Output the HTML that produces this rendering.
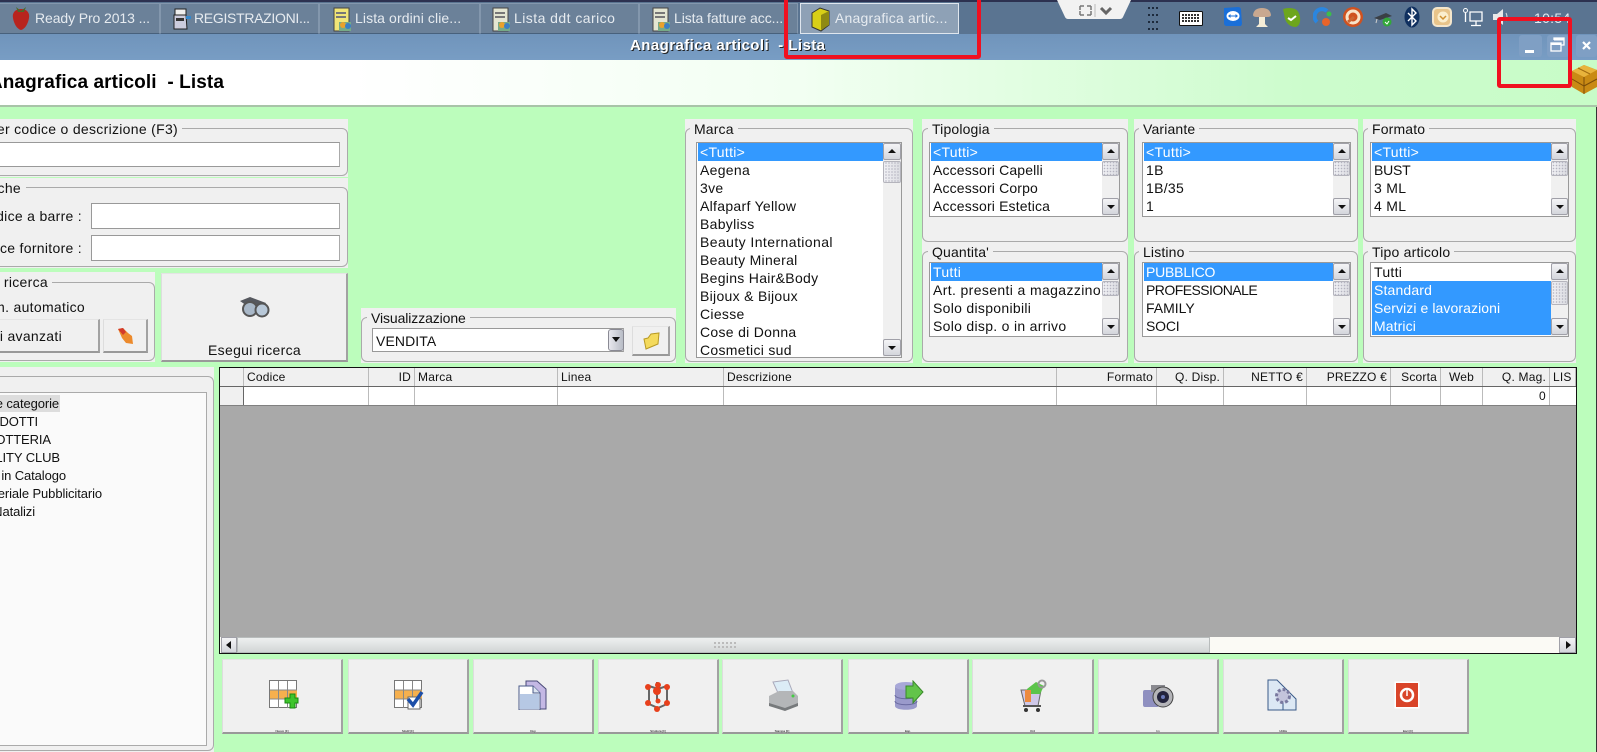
<!DOCTYPE html>
<html><head><meta charset="utf-8"><style>
html,body{margin:0;padding:0;width:1597px;height:752px;overflow:hidden;background:#bcfdbc}
body{position:relative;font-family:"Liberation Sans",sans-serif;font-size:14px;letter-spacing:.3px;color:#111}
div,span,svg{position:absolute;box-sizing:border-box}
.t{white-space:pre;line-height:18px}
.tab{top:3px;height:31px;background:#6b8199;border:1px solid #8397ad;border-bottom-color:#48617c;color:#e8edf2}
.tt{top:9px;color:#e6ebf0;white-space:pre;line-height:18px;font-size:14px}
.p{background:#f0f0f0}
.b{border:1px solid #aaa;border-radius:6px}
.lg{background:#f0f0f0;top:0;height:18px;padding:0 4px;line-height:20px;white-space:pre;letter-spacing:.15px}
.lb{background:#fff;border:1px solid #999;overflow:hidden}
.r{left:1px;height:18px;line-height:18px;padding-left:2px;white-space:pre;width:calc(100% - 2px)}
.s{background:#39f;color:#fff}
.sb{background:#f0f0f0;top:0;bottom:0}
.ub,.db{left:0;right:0;height:17px;background:linear-gradient(#f4f4f6,#d4d6dc);border:1px solid #a0a0a8;border-radius:2px}
.ub:after{content:"";position:absolute;left:4px;top:5px;border:4px solid transparent;border-top:0;border-bottom:4px solid #111}
.db:after{content:"";position:absolute;left:4px;top:6px;border:4px solid transparent;border-bottom:0;border-top:4px solid #111}
.th{left:0;right:0;background:radial-gradient(circle,#b4b4c0 30%,transparent 42%) center/3px 3px,linear-gradient(90deg,#f0f0f4,#dcdde2);border:1px solid #b4b4bc;border-radius:2px}
.in{background:#fff;border:1px solid #999;border-right-color:#aaa}
.btn{background:#f0f0f0;border:1px solid #eee;border-right:2px solid #a2a2a2;border-bottom:2px solid #999;border-top-color:#e4e4e4;border-left-color:#ddd}
.h{top:368px;height:18px;font-size:12px;line-height:19px;white-space:pre;background:#f0f0f0;border-right:1px solid #bbb;padding:0 3px;overflow:hidden;letter-spacing:.2px}
.c{top:387px;height:18px;background:#fff;border-right:1px solid #bbb}
.ra{text-align:right}
.red{border:4px solid #f01020;border-radius:3px;z-index:9}
.cap{left:0;right:0;top:69px;text-align:center;font-size:3px;line-height:4px;color:#000;letter-spacing:0}
.tr{font-size:13px;letter-spacing:-.1px;text-align:right;left:-100px}
.ce{letter-spacing:.15px}
</style></head><body>

<!-- taskbar -->
<div style="left:0;top:0;width:1597px;height:34px;background:#5a7491"></div>
<div style="left:0;top:0;width:1597px;height:2px;background:#2c3150"></div>
<div class="tab" style="left:-2px;width:162px"></div>
<div class="tab" style="left:160px;width:159px"></div>
<div class="tab" style="left:319px;width:161px"></div>
<div class="tab" style="left:480px;width:159px"></div>
<div class="tab" style="left:639px;width:159px"></div>
<div class="tab" style="left:800px;width:159px;background:#8ea1b6;border-color:#dfe6ee"></div>
<div class="tt" style="left:35px;letter-spacing:-.1px">Ready Pro 2013 ...</div>
<div class="tt" style="left:194px;letter-spacing:-.3px">REGISTRAZIONI...</div>
<div class="tt" style="left:355px;letter-spacing:.1px">Lista ordini clie...</div>
<div class="tt" style="left:514px;letter-spacing:.45px">Lista ddt carico</div>
<div class="tt" style="left:674px;letter-spacing:-.07px">Lista fatture acc...</div>
<div class="tt" style="left:835px;letter-spacing:.2px">Anagrafica artic...</div>

<svg style="left:10px;top:6px" width="22" height="25" viewBox="0 0 22 25"><path d="M11 3C5 3 2 7 3 12c1 6 4 11 8 12 4-1 7-6 8-12 1-5-2-9-8-9z" fill="#b8241e"/><path d="M6 1l5 4 5-4-2 5H8z" fill="#4d6a2a"/></svg>
<svg style="left:171px;top:8px" width="21" height="23" viewBox="0 0 21 23"><path d="M4 1h11v6H4z" fill="#eee" stroke="#222"/><path d="M3 7h12l1 14H3z" fill="#ccd" stroke="#222"/><rect x="5" y="10" width="8" height="3" fill="#333"/><rect x="15" y="8" width="5" height="3" fill="#38c"/></svg>
<svg style="left:333px;top:7px" width="19" height="25" viewBox="0 0 19 25"><rect x="1" y="1" width="15" height="23" fill="#f1e577" stroke="#444"/><rect x="3" y="5" width="10" height="2" fill="#777"/><rect x="3" y="9" width="10" height="2" fill="#777"/><path d="M6 15h12v9H6z" fill="#7a8"/><circle cx="10" cy="18" r="3" fill="#e8a12c"/><circle cx="15" cy="19" r="3" fill="#3a7fc4"/></svg>
<svg style="left:492px;top:7px" width="19" height="25" viewBox="0 0 19 25"><rect x="1" y="1" width="15" height="23" fill="#e4e6d2" stroke="#444"/><rect x="3" y="5" width="10" height="2" fill="#777"/><rect x="3" y="9" width="10" height="2" fill="#777"/><path d="M6 15h12v9H6z" fill="#7a8"/><circle cx="10" cy="18" r="3" fill="#e8a12c"/><circle cx="15" cy="19" r="3" fill="#3a7fc4"/></svg>
<svg style="left:652px;top:7px" width="19" height="25" viewBox="0 0 19 25"><rect x="1" y="1" width="15" height="23" fill="#e4e6d2" stroke="#444"/><rect x="3" y="5" width="10" height="2" fill="#777"/><rect x="3" y="9" width="10" height="2" fill="#777"/><path d="M6 15h12v9H6z" fill="#7a8"/><circle cx="10" cy="18" r="3" fill="#e8a12c"/><circle cx="15" cy="19" r="3" fill="#3a7fc4"/></svg>
<svg style="left:810px;top:7px" width="21" height="25" viewBox="0 0 21 25"><path d="M2 6l8-5 9 3v14l-8 6-9-4z" fill="#d8cf17" stroke="#333"/><path d="M11 8v15l8-5V4z" fill="#8f8a12"/></svg>

<!-- tray -->
<svg style="left:1057px;top:0" width="75" height="20" viewBox="0 0 75 20"><path d="M0 0h74l-8 17q-1 2-3 2H11q-2 0-3-2z" fill="#f2f2f2"/><path d="M23 6h4M23 6v4M34 6h-4M34 6v4M23 15h4M23 15v-4M34 15h-4M34 15v-4" stroke="#777" stroke-width="1.5" fill="none"/><path d="M38 4v13" stroke="#bbb"/><path d="M44 8l5 5 5-5" stroke="#666" stroke-width="3" fill="none"/></svg>
<svg style="left:1148px;top:6px" width="12" height="26" viewBox="0 0 12 26" fill="#1d2a3c"><path d="M0 1h2v2H0zM4 1h2v2H4zM8 1h2v2H8zM0 8h2v2H0zM4 8h2v2H4zM8 8h2v2H8zM0 15h2v2H0zM4 15h2v2H4zM8 15h2v2H8zM0 22h2v2H0zM4 22h2v2H4zM8 22h2v2H8z"/></svg>
<svg style="left:1179px;top:11px" width="24" height="15" viewBox="0 0 24 15"><rect x=".5" y=".5" width="23" height="14" rx="1" fill="#fff" stroke="#111"/><path d="M3 4h18M3 7h18M3 10h18" stroke="#333" stroke-dasharray="2 1" stroke-width="2"/></svg>
<svg style="left:1223px;top:7px" width="20" height="20" viewBox="0 0 20 20"><path d="M1 1l14-1q3 0 3 3l1 14-1 2H4q-3 0-3-3z" fill="#1a6fd8"/><ellipse cx="10" cy="9" rx="6.500" ry="5" fill="#fff"/><path d="M5 9l2.500-2v1.500h5V7L15 9l-2.500 2V9.500h-5V11z" fill="#1a6fd8"/></svg>
<svg style="left:1252px;top:7px" width="20" height="21" viewBox="0 0 20 21"><path d="M1 8Q2 1 10 1t9 7q0 2-4 2H5q-4 0-4-2z" fill="#c8a890"/><path d="M7 10h6v7l3 3H4l3-3z" fill="#f4ecd6"/></svg>
<svg style="left:1282px;top:7px" width="20" height="21" viewBox="0 0 20 21"><path d="M1 2q6-2 12 0 4 2 5 8 1 8-4 10Q6 20 3 12z" fill="#6da61d"/><path d="M6 11l3 2 5-4" stroke="#fff" stroke-width="2" fill="none"/></svg>
<svg style="left:1313px;top:7px" width="20" height="20" viewBox="0 0 20 20"><path d="M4 15A7 7 0 1 1 14 4" stroke="#2a86e0" stroke-width="4" fill="none"/><circle cx="16" cy="7" r="2.5" fill="#3bbf4a"/><circle cx="13" cy="15" r="4" fill="#e8642a"/></svg>
<svg style="left:1342px;top:6px" width="22" height="22" viewBox="0 0 22 22"><circle cx="11" cy="11" r="10" fill="#cf5220"/><circle cx="11" cy="11" r="6" fill="none" stroke="#f8e3c9" stroke-width="3"/><path d="M6 16l6-5" stroke="#c63" stroke-width="3"/></svg>
<svg style="left:1373px;top:10px" width="21" height="17" viewBox="0 0 21 17"><path d="M1 8l12-5 6 3-12 4z" fill="#3a3f45"/><path d="M4 9l-1 4" stroke="#ccc"/><circle cx="14" cy="12" r="4.5" fill="#32a83a"/><path d="M12 12l2 2 2-3" stroke="#fff" fill="none"/></svg>
<svg style="left:1404px;top:6px" width="16" height="22" viewBox="0 0 16 22"><ellipse cx="8" cy="11" rx="7.5" ry="10.5" fill="#10305f"/><path d="M4 7l8 8-4 4V3l4 4-8 8" stroke="#fff" stroke-width="1.4" fill="none"/></svg>
<svg style="left:1432px;top:7px" width="20" height="20" viewBox="0 0 20 20"><rect x="1" y="1" width="18" height="18" rx="4" fill="#e8c48a" stroke="#f4e6cc" stroke-width="2"/><circle cx="11" cy="10" r="5.5" fill="#fbeecd"/><path d="M8 9l3 3 3-3" stroke="#d09030" stroke-width="1.5" fill="none"/></svg>
<svg style="left:1462px;top:7px" width="22" height="20" viewBox="0 0 22 20" stroke="#fff" fill="none"><circle cx="3.5" cy="3.5" r="2"/><path d="M3.5 6v9M8 5h12v9H8zM14 14v4M9 18.5h10" stroke-width="1.3"/></svg>
<svg style="left:1492px;top:7px" width="20" height="20" viewBox="0 0 20 20"><path d="M1 7h4l6-5v16l-6-5H1z" fill="#e8e8e8"/><path d="M14 6q2 4 0 8" stroke="#e0e0e0" fill="none"/></svg>
<div class="t" style="left:1534px;top:9px;color:#e4eaf0;font-size:14px">10:54</div>

<!-- title bar -->
<div style="left:0;top:34px;width:1597px;height:26px;background:linear-gradient(#7094bb,#789dc4)"></div>
<div class="t" style="left:630px;top:37px;color:#fff;font-weight:bold;font-size:15px;letter-spacing:.43px;text-shadow:1px 1px 0 #222">Anagrafica articoli  - Lista</div>
<div style="left:1519px;top:35px;width:23px;height:22px;background:#7f9fc4;border-radius:3px"></div>
<div style="left:1525px;top:50px;width:9px;height:3px;background:#fff"></div>
<div style="left:1547px;top:35px;width:22px;height:22px;background:#7f9fc4;border-radius:3px"></div>
<svg style="left:1548px;top:36px" width="20" height="18" viewBox="0 0 20 18" fill="none" stroke="#fff" stroke-width="1.3"><path d="M6 4V2h10v7h-3"/><path d="M6 3.5h10" stroke-width="2"/><rect x="3" y="7" width="10" height="8"/><path d="M3 8h10" stroke-width="2"/></svg>
<div style="left:1576px;top:35px;width:21px;height:22px;background:#7f9fc4;border-radius:3px"></div>
<svg style="left:1581px;top:40px" width="11" height="11" viewBox="0 0 11 11"><path d="M2 2l7 7M9 2l-7 7" stroke="#fff" stroke-width="2.2"/></svg>

<!-- header -->
<div style="left:0;top:60px;width:1597px;height:46px;background:linear-gradient(90deg,#fff 0,#fff 22%,#f2fff2 50%,#ccfccc 82%,#c8fcc8 100%)"></div>
<div style="left:0;top:105px;width:1597px;height:2px;background:#a8c4a8"></div>
<div class="t" style="left:-100px;width:324px;text-align:right;top:73px;line-height:20px;font-size:19px;font-weight:bold;letter-spacing:.1px;color:#000">Anagrafica articoli  - Lista</div>
<svg style="left:1571px;top:63px" width="26" height="31" viewBox="0 0 26 31"><path d="M1 8l12-6 13 5v17l-13 7-12-7z" fill="#c98a14"/><path d="M1 8l12 6 13-7-13-5z" fill="#e8b33c"/><path d="M13 14v17" stroke="#7a4c08"/><path d="M1 16l12 7 13-7" stroke="#7a4c08" fill="none"/><path d="M7 5l12 6" stroke="#a06a10"/></svg>
<div style="left:1596px;top:107px;width:1px;height:645px;background:#333"></div>

<!-- left search panels -->
<div class="p" style="left:-10px;top:119px;width:358px;height:58px"><div class="b" style="left:0;top:9px;right:0;bottom:1px"></div></div>
<div class="lg" style="left:-5px;top:120px;width:187px;height:16px"></div>
<div class="t" style="left:-100px;width:278px;text-align:right;top:121px;line-height:16px">Per codice o descrizione (F3)</div>
<div class="in" style="left:-5px;top:142px;width:345px;height:25px"></div>

<div class="p" style="left:-10px;top:178px;width:358px;height:90px"><div class="b" style="left:0;top:9px;right:0;bottom:1px"></div><div class="lg" style="left:5px;width:31px"></div></div>
<div class="t" style="left:-100px;width:121px;text-align:right;top:180px;line-height:16px">Ricerche</div>
<div class="t" style="left:-100px;width:182px;text-align:right;top:207px">Codice a barre :</div>
<div class="t" style="left:-100px;width:182px;text-align:right;top:239px">Codice fornitore :</div>
<div class="in" style="left:91px;top:203px;width:249px;height:26px"></div>
<div class="in" style="left:91px;top:235px;width:249px;height:26px"></div>

<div class="p" style="left:-10px;top:272px;width:165px;height:90px"><div class="b" style="left:0;top:10px;right:0;bottom:1px"></div></div>
<div class="lg" style="left:-2px;top:272px;width:54px"></div>
<div class="t" style="left:-100px;width:148px;text-align:right;top:274px;line-height:16px">Esegui ricerca</div>
<div class="t" style="left:-100px;width:185px;text-align:right;top:298px">Agg. autom. automatico</div>
<div class="btn" style="left:-10px;top:319px;width:110px;height:34px"></div>
<div class="t" style="left:-100px;width:162px;text-align:right;top:327px">Parametri avanzati</div>
<div class="btn" style="left:103px;top:319px;width:45px;height:34px"></div>
<svg style="left:116px;top:326px" width="20" height="20" viewBox="0 0 20 20"><path d="M2 3l5-1 5 5 4 3 1 8-7-1-4-5z" fill="#ec8a2c"/><path d="M2 3l5-1 3 4-3 3z" fill="#d33a2a"/></svg>

<div class="btn" style="left:161px;top:273px;width:187px;height:89px"></div>
<svg style="left:238px;top:296px" width="33" height="22" viewBox="0 0 33 22"><path d="M2 5L12 1l16 6-5 5H12z" fill="#55585e"/><circle cx="12" cy="13" r="7" fill="#a9b8c8" stroke="#555" stroke-width="2"/><circle cx="24" cy="14" r="6.5" fill="#b8c8d8" stroke="#555" stroke-width="2"/></svg>
<div class="t" style="left:161px;width:187px;text-align:center;top:341px">Esegui ricerca</div>

<!-- visualizzazione -->
<div class="p" style="left:361px;top:308px;width:315px;height:55px"><div class="b" style="left:0;top:9px;right:0;bottom:1px"></div><div class="lg" style="left:6px;letter-spacing:-.1px">Visualizzazione</div></div>
<div class="in" style="left:372px;top:328px;width:252px;height:24px"></div>
<div class="t" style="left:376px;top:332px;letter-spacing:.1px">VENDITA</div>
<div style="left:608px;top:329px;width:16px;height:22px;background:linear-gradient(90deg,#e8e8ee,#b8bcc6);border:1px solid #8a8a94;border-radius:3px"></div>
<svg style="left:612px;top:337px" width="8" height="6" viewBox="0 0 8 6"><path d="M0 0h8L4 5z" fill="#111"/></svg>
<div class="btn" style="left:632px;top:326px;width:38px;height:30px"></div>
<svg style="left:643px;top:332px" width="17" height="18" viewBox="0 0 17 18"><path d="M1 7l4-1 3-4 8-1-1 11-12 5z" fill="#f4da5c" stroke="#b89a24"/></svg>

<!-- Marca -->
<div class="p" style="left:685px;top:119px;width:228px;height:244px"><div class="b" style="left:0;top:9px;right:0;bottom:1px"></div><div class="lg" style="left:5px">Marca</div></div>
<div class="lb" style="left:696px;top:142px;width:206px;height:216px">
<div class="r s" style="top:0">&lt;Tutti&gt;</div><div class="r" style="top:18px">Aegena</div><div class="r" style="top:36px">3ve</div><div class="r" style="top:54px">Alfaparf Yellow</div><div class="r" style="top:72px">Babyliss</div><div class="r" style="top:90px;letter-spacing:.42px">Beauty International</div><div class="r" style="top:108px">Beauty Mineral</div><div class="r" style="top:126px">Begins Hair&amp;Body</div><div class="r" style="top:144px">Bijoux &amp; Bijoux</div><div class="r" style="top:162px">Ciesse</div><div class="r" style="top:180px">Cose di Donna</div><div class="r" style="top:198px">Cosmetici sud</div>
<div class="sb" style="left:186px;width:18px"><div class="ub" style="top:0"></div><div class="th" style="top:18px;height:22px"></div><div class="db" style="bottom:1px"></div></div></div>

<!-- Tipologia -->
<div class="p" style="left:922px;top:119px;width:206px;height:124px"><div class="b" style="left:0;top:9px;right:0;bottom:1px"></div><div class="lg" style="left:6px">Tipologia</div></div>
<div class="lb" style="left:929px;top:142px;width:191px;height:75px">
<div class="r s" style="top:0">&lt;Tutti&gt;</div><div class="r ce" style="top:18px">Accessori Capelli</div><div class="r ce" style="top:36px">Accessori Corpo</div><div class="r ce" style="top:54px">Accessori Estetica</div>
<div class="sb" style="left:172px;width:17px"><div class="ub" style="top:0"></div><div class="th" style="top:18px;height:15px"></div><div class="db" style="bottom:1px"></div></div></div>

<!-- Quantita -->
<div class="p" style="left:922px;top:242px;width:206px;height:121px"><div class="b" style="left:0;top:9px;right:0;bottom:1px"></div><div class="lg" style="left:6px">Quantita'</div></div>
<div class="lb" style="left:929px;top:262px;width:191px;height:75px">
<div class="r s" style="top:0">Tutti</div><div class="r" style="top:18px;letter-spacing:.37px">Art. presenti a magazzino</div><div class="r" style="top:36px">Solo disponibili</div><div class="r" style="top:54px">Solo disp. o in arrivo</div>
<div class="sb" style="left:172px;width:17px"><div class="ub" style="top:0"></div><div class="th" style="top:18px;height:15px"></div><div class="db" style="bottom:1px"></div></div></div>

<!-- Variante -->
<div class="p" style="left:1134px;top:119px;width:224px;height:124px"><div class="b" style="left:0;top:9px;right:0;bottom:1px"></div><div class="lg" style="left:5px">Variante</div></div>
<div class="lb" style="left:1142px;top:142px;width:209px;height:75px">
<div class="r s" style="top:0">&lt;Tutti&gt;</div><div class="r" style="top:18px">1B</div><div class="r" style="top:36px">1B/35</div><div class="r" style="top:54px">1</div>
<div class="sb" style="left:190px;width:17px"><div class="ub" style="top:0"></div><div class="th" style="top:18px;height:15px"></div><div class="db" style="bottom:1px"></div></div></div>

<!-- Listino -->
<div class="p" style="left:1134px;top:242px;width:224px;height:121px"><div class="b" style="left:0;top:9px;right:0;bottom:1px"></div><div class="lg" style="left:5px">Listino</div></div>
<div class="lb" style="left:1142px;top:262px;width:209px;height:75px">
<div class="r s" style="top:0;letter-spacing:-.2px">PUBBLICO</div><div class="r" style="top:18px;letter-spacing:-.55px">PROFESSIONALE</div><div class="r" style="top:36px;letter-spacing:0">FAMILY</div><div class="r" style="top:54px;letter-spacing:-.2px">SOCI</div>
<div class="sb" style="left:190px;width:17px"><div class="ub" style="top:0"></div><div class="th" style="top:18px;height:15px"></div><div class="db" style="bottom:1px"></div></div></div>

<!-- Formato -->
<div class="p" style="left:1363px;top:119px;width:213px;height:124px"><div class="b" style="left:0;top:9px;right:0;bottom:1px"></div><div class="lg" style="left:5px">Formato</div></div>
<div class="lb" style="left:1370px;top:142px;width:199px;height:75px">
<div class="r s" style="top:0">&lt;Tutti&gt;</div><div class="r" style="top:18px;letter-spacing:-.2px">BUST</div><div class="r" style="top:36px">3 ML</div><div class="r" style="top:54px">4 ML</div>
<div class="sb" style="left:180px;width:17px"><div class="ub" style="top:0"></div><div class="th" style="top:18px;height:15px"></div><div class="db" style="bottom:1px"></div></div></div>

<!-- Tipo articolo -->
<div class="p" style="left:1363px;top:242px;width:213px;height:121px"><div class="b" style="left:0;top:9px;right:0;bottom:1px"></div><div class="lg" style="left:5px;letter-spacing:.2px">Tipo articolo</div></div>
<div class="lb" style="left:1370px;top:262px;width:199px;height:75px">
<div class="r" style="top:0">Tutti</div><div class="r s ce" style="top:18px">Standard</div><div class="r s" style="top:36px;letter-spacing:.08px">Servizi e lavorazioni</div><div class="r s" style="top:54px;letter-spacing:.1px">Matrici</div>
<div class="sb" style="left:180px;width:17px"><div class="ub" style="top:0"></div><div class="th" style="top:18px;height:24px"></div><div class="db" style="bottom:1px"></div></div></div>

<!-- tree -->
<div class="p" style="left:-10px;top:367px;width:224px;height:385px"><div class="b" style="left:0;top:9px;right:0;bottom:1px"></div></div>
<div style="left:-5px;top:392px;width:212px;height:354px;background:#fafafa;border:1px solid #aaa"></div>
<div style="left:0;top:395px;width:60px;height:17px;background:#ddd"></div>
<div class="t tr" style="width:159px;top:395px">Tutte le categorie</div>
<div class="t tr" style="width:138px;top:413px">PRODOTTI</div>
<div class="t tr" style="width:151px;top:431px">LOTTERIA</div>
<div class="t tr" style="width:160px;top:449px">FIDELITY CLUB</div>
<div class="t tr" style="width:166px;top:467px">Art. in Catalogo</div>
<div class="t tr" style="width:202px;top:485px">Materiale Pubblicitario</div>
<div class="t tr" style="width:135px;top:503px">Natalizi</div>

<!-- grid -->
<div style="left:219px;top:367px;width:1358px;height:287px;background:#a9a9a9;border:1px solid #111"></div>
<div class="h" style="left:220px;width:24px"></div>
<div class="h" style="left:244px;width:125px">Codice</div>
<div class="h ra" style="left:369px;width:46px">ID</div>
<div class="h" style="left:415px;width:143px">Marca</div>
<div class="h" style="left:558px;width:166px">Linea</div>
<div class="h" style="left:724px;width:333px">Descrizione</div>
<div class="h ra" style="left:1057px;width:100px">Formato</div>
<div class="h ra" style="left:1157px;width:67px">Q. Disp.</div>
<div class="h ra" style="left:1224px;width:83px">NETTO €</div>
<div class="h ra" style="left:1307px;width:84px">PREZZO €</div>
<div class="h ra" style="left:1391px;width:50px">Scorta</div>
<div class="h" style="left:1441px;width:42px;text-align:center">Web</div>
<div class="h ra" style="left:1483px;width:67px">Q. Mag.</div>
<div class="h" style="left:1550px;width:26px">LIS</div>
<div style="left:220px;top:386px;width:1356px;height:1px;background:#666"></div>
<div style="left:220px;top:387px;width:24px;height:18px;background:#f0f0f0;border-right:1px solid #666"></div>
<div class="c" style="left:244px;width:125px"></div>
<div class="c" style="left:369px;width:46px"></div>
<div class="c" style="left:415px;width:143px"></div>
<div class="c" style="left:558px;width:166px"></div>
<div class="c" style="left:724px;width:333px"></div>
<div class="c" style="left:1057px;width:100px"></div>
<div class="c" style="left:1157px;width:67px"></div>
<div class="c" style="left:1224px;width:83px"></div>
<div class="c" style="left:1307px;width:84px"></div>
<div class="c" style="left:1391px;width:50px"></div>
<div class="c" style="left:1441px;width:42px"></div>
<div class="c" style="left:1483px;width:67px;font-size:12px;line-height:19px;text-align:right;padding-right:3px">0</div>
<div class="c" style="left:1550px;width:26px;border:0"></div>
<div style="left:220px;top:405px;width:1356px;height:1px;background:#808080"></div>
<!-- h scrollbar -->
<div style="left:220px;top:637px;width:1356px;height:16px;background:#fbfaf5"></div>
<div style="left:237px;top:637px;width:973px;height:16px;background:linear-gradient(#eef0f0,#d2d6d6);border:1px solid #b8bcbc"></div>
<div style="left:221px;top:637px;width:16px;height:16px;background:linear-gradient(#f4f4f6,#d4d6dc);border:1px solid #a0a0a8"></div>
<svg style="left:225px;top:640px" width="8" height="10" viewBox="0 0 8 10"><path d="M6 1v8L1 5z" fill="#111"/></svg>
<div style="left:1559px;top:637px;width:17px;height:16px;background:linear-gradient(#f4f4f6,#d4d6dc);border:1px solid #a0a0a8"></div>
<svg style="left:1564px;top:640px" width="8" height="10" viewBox="0 0 8 10"><path d="M2 1v8l5-4z" fill="#111"/></svg>
<svg style="left:713px;top:642px" width="24" height="7"><path d="M1 1h22M1 5h22" stroke="#bbb" stroke-width="2" stroke-dasharray="2 2"/></svg>

<!-- bottom buttons -->
<div class="btn" style="left:222px;top:659px;width:121px;height:75px"><div class="cap">Nuovo [F]</div></div>
<div class="btn" style="left:348px;top:659px;width:121px;height:75px"><div class="cap">Modif [F]</div></div>
<div class="btn" style="left:473px;top:659px;width:121px;height:75px"><div class="cap">Dup</div></div>
<div class="btn" style="left:598px;top:659px;width:121px;height:75px"><div class="cap">Struttura [F]</div></div>
<div class="btn" style="left:722px;top:659px;width:121px;height:75px"><div class="cap">Stampa [F]</div></div>
<div class="btn" style="left:848px;top:659px;width:121px;height:75px"><div class="cap">Esp.</div></div>
<div class="btn" style="left:972px;top:659px;width:122px;height:75px"><div class="cap">Ord</div></div>
<div class="btn" style="left:1098px;top:659px;width:121px;height:75px"><div class="cap">Im</div></div>
<div class="btn" style="left:1223px;top:659px;width:121px;height:75px"><div class="cap">Utilità</div></div>
<div class="btn" style="left:1348px;top:659px;width:121px;height:75px"><div class="cap">Esci [F]</div></div>

<svg style="left:269px;top:680px" width="32" height="30" viewBox="0 0 32 30"><rect x=".5" y=".5" width="27" height="27" fill="#fff" stroke="#777"/><rect x="1" y="10" width="27" height="9" fill="#f6b04e"/><path d="M9.500 1v27M18.500 1v27M1 10h27M1 19h27" stroke="#888"/><path d="M19 17h5v-4h5v4h3v5h-3v5h-5v-5h-5z" transform="translate(-3,1)" fill="#3ec42c" stroke="#178a10"/></svg>
<svg style="left:394px;top:680px" width="32" height="30" viewBox="0 0 32 30"><rect x=".5" y=".5" width="27" height="27" fill="#fff" stroke="#777"/><rect x="1" y="10" width="27" height="9" fill="#f6b04e"/><path d="M9.500 1v27M18.500 1v27M1 10h27M1 19h27" stroke="#888"/><rect x="14" y="17" width="12" height="12" fill="#fff" stroke="#666"/><path d="M14 19l5 6 9-13" stroke="#1c4ea8" stroke-width="3.500" fill="none"/></svg>
<svg style="left:518px;top:680px" width="30" height="30" viewBox="0 0 30 30"><path d="M8 1h11l9 8v20H8z" fill="#c4b8e4" stroke="#4a4a78"/><path d="M1 6h14l7 7v17H1z" fill="#fff" stroke="#4a5a88"/><rect x="2" y="14" width="19" height="15" fill="#b6c8e4"/><path d="M15 6v7h7" fill="#dce4f0" stroke="#4a5a88"/></svg>
<svg style="left:643px;top:680px" width="30" height="32" viewBox="0 0 30 32"><path d="M6 6l9 3 9-3M6 6v18l9 4 9-4V6M14 2v20" stroke="#666" stroke-width="2" fill="none"/><g fill="#e8401c"><circle cx="5" cy="7" r="3"/><circle cx="15" cy="5" r="3"/><circle cx="24" cy="7" r="3"/><circle cx="14" cy="11" r="4"/><circle cx="5" cy="23" r="3"/><circle cx="15" cy="21" r="2.500"/><circle cx="24" cy="23" r="3"/><circle cx="14" cy="29" r="3"/></g></svg>
<svg style="left:767px;top:679px" width="32" height="32" viewBox="0 0 32 32"><path d="M6 3l15-2 5 13H11z" fill="#dcecf6" stroke="#aab"/><path d="M2 17l10-5h14l5 5v9l-13 5L2 25z" fill="#b4b6b8"/><path d="M2 24l16 5 13-5v3l-13 5-16-5z" fill="#777a7c"/><circle cx="26" cy="17" r="1.500" fill="#4c4"/></svg>
<svg style="left:894px;top:680px" width="30" height="32" viewBox="0 0 30 32"><ellipse cx="12" cy="6" rx="11" ry="4" fill="#a8a8d8"/><path d="M1 6v20c0 5 22 5 22 0V6c0 5-22 5-22 0z" fill="#9a9acb"/><path d="M1 15c0 5 22 5 22 0M1 21c0 5 22 5 22 0" stroke="#6a6aa0" fill="none"/><path d="M12 6h7V1l10 11-10 11v-5h-7z" fill="#62c44a" stroke="#3a8a2a"/></svg>
<svg style="left:1018px;top:679px" width="30" height="34" viewBox="0 0 30 34"><path d="M3 11l20 0-3 16H7z" fill="#cfc8e8" stroke="#666"/><path d="M9 10l9-7 8 4-4 8H9z" fill="#5cc44a"/><rect x="7" y="11" width="6" height="12" fill="#ec8a40"/><circle cx="24" cy="5" r="3.500" fill="none" stroke="#999" stroke-width="2"/><circle cx="8" cy="31" r="2" fill="#333"/><circle cx="20" cy="31" r="2" fill="#333"/><path d="M5 27h18" stroke="#555" stroke-width="2"/></svg>
<svg style="left:1142px;top:681px" width="32" height="28" viewBox="0 0 32 28"><rect x="1" y="9" width="16" height="17" rx="2" fill="#8f90c0"/><rect x="9" y="4" width="14" height="7" fill="#8a8a90"/><circle cx="21" cy="16" r="10" fill="#b4b4b8" stroke="#444"/><circle cx="21" cy="16" r="6" fill="#23233c"/><circle cx="21" cy="16" r="2" fill="#6a78b8"/></svg>
<svg style="left:1267px;top:679px" width="32" height="32" viewBox="0 0 32 32"><path d="M1 1h9l11 11v19H1z" fill="#dce8f4" stroke="#3a5a88"/><path d="M16 13h6l7 7v11H16z" fill="#dce8f4" stroke="#3a5a88"/><circle cx="16" cy="17" r="6.500" fill="#c4c4dc" stroke="#7a7aa0" stroke-width="3" stroke-dasharray="3 2"/></svg>
<svg style="left:1394px;top:681px" width="26" height="28" viewBox="0 0 26 28"><rect x=".5" y=".5" width="25" height="27" fill="#fff"/><rect x="2" y="2" width="22" height="24" fill="#d9452a"/><circle cx="13" cy="14" r="6" fill="none" stroke="#fff" stroke-width="2.500"/><path d="M13 9v9" stroke="#d9452a" stroke-width="3"/><path d="M13 9v6" stroke="#fff" stroke-width="1.500"/></svg>

<!-- annotations -->
<div class="red" style="left:784px;top:-6px;width:197px;height:65px"></div>
<div class="red" style="left:1497px;top:17px;width:75px;height:71px"></div>
</body></html>
